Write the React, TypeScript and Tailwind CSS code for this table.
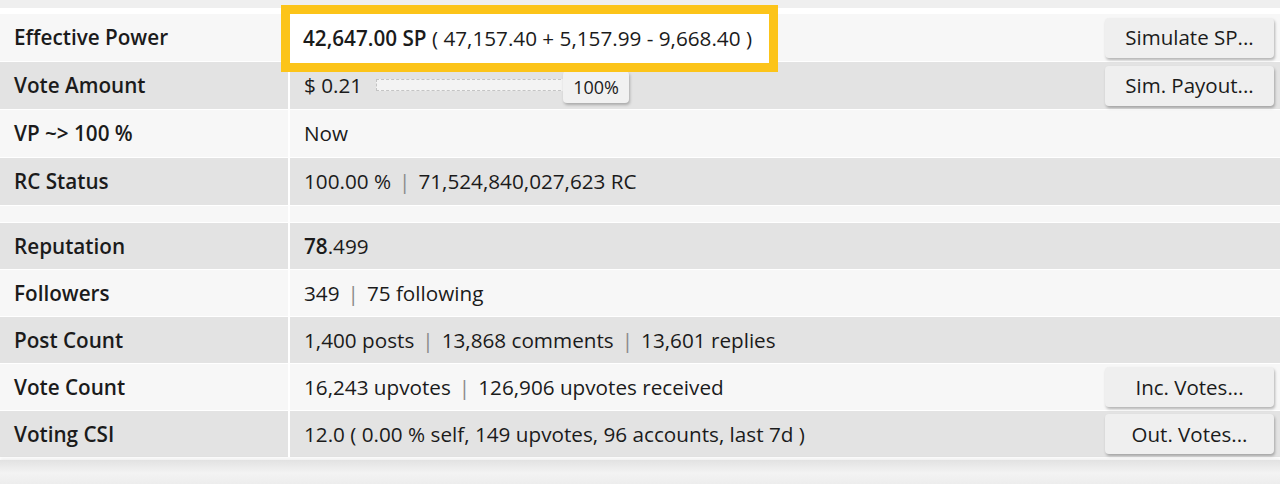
import React from 'react';

type Row = {
  label: string;
  value: React.ReactNode;
  action?: string;
  shade: 'light' | 'dark';
};

const Sep = () => <span className="mx-[8px] text-[#8a8a8a]">|</span>;

function ActionButton({ children }: { children: React.ReactNode }) {
  return (
    <button className="h-[40px] w-[169px] rounded-[4px] bg-[#efefef] text-[20.5px] text-[#1b1b1b] shadow-[1px_2px_3px_rgba(0,0,0,0.28)]">
      {children}
    </button>
  );
}

function TableRow({ row, tall }: { row: Row; tall?: boolean }) {
  const bg = row.shade === 'light' ? 'bg-[#f7f7f7]' : 'bg-[#e3e3e3]';
  return (
    <div className={`flex ${tall ? 'h-[48px]' : 'h-[47px]'} border-b border-white ${bg}`}>
      <div className="flex w-[290px] shrink-0 items-center border-r-2 border-white pl-[14px] font-semibold text-[#1b1b1b]">
        {row.label}
      </div>
      <div className="flex flex-1 items-center justify-between pl-[14px] pr-[6px] text-[#1b1b1b]">
        <div className="flex items-center">{row.value}</div>
        {row.action && <ActionButton>{row.action}</ActionButton>}
      </div>
    </div>
  );
}

const topRows: Row[] = [
  {
    label: 'Effective Power',
    value: (
      <span>
        <span className="font-semibold">42,647.00 SP</span> ( 47,157.40 + 5,157.99 - 9,668.40 )
      </span>
    ),
    action: 'Simulate SP...',
    shade: 'light',
  },
  {
    label: 'Vote Amount',
    value: (
      <div className="flex items-center">
        <span>$ 0.21</span>
        <div className="relative ml-[14px] h-[12px] w-[190px] border border-dashed border-[#c4c4c4] bg-[#f3f3f3]">
          <div className="absolute left-[186px] top-[-9px] flex h-[32px] w-[66px] items-center justify-center rounded-[4px] bg-[#f1f1f1] text-[18px] shadow-[1px_2px_3px_rgba(0,0,0,0.25)]">
            100%
          </div>
        </div>
      </div>
    ),
    action: 'Sim. Payout...',
    shade: 'dark',
  },
  { label: 'VP ~> 100 %', value: 'Now', shade: 'light' },
  {
    label: 'RC Status',
    value: (
      <span>
        100.00 %<Sep />71,524,840,027,623 RC
      </span>
    ),
    shade: 'dark',
  },
];

const bottomRows: Row[] = [
  {
    label: 'Reputation',
    value: (
      <span>
        <span className="font-semibold">78</span>.499
      </span>
    ),
    shade: 'dark',
  },
  {
    label: 'Followers',
    value: (
      <span>
        349<Sep />75 following
      </span>
    ),
    shade: 'light',
  },
  {
    label: 'Post Count',
    value: (
      <span>
        1,400 posts<Sep />13,868 comments<Sep />13,601 replies
      </span>
    ),
    shade: 'dark',
  },
  {
    label: 'Vote Count',
    value: (
      <span>
        16,243 upvotes<Sep />126,906 upvotes received
      </span>
    ),
    action: 'Inc. Votes...',
    shade: 'light',
  },
  {
    label: 'Voting CSI',
    value: '12.0 ( 0.00 % self, 149 upvotes, 96 accounts, last 7d )',
    action: 'Out. Votes...',
    shade: 'dark',
  },
];

export default function App() {
  return (
    <div className="relative h-[484px] w-[1280px] overflow-hidden bg-white font-['Open_Sans',sans-serif] text-[20.7px] leading-none">
      {/* previous panel edge */}
      <div className="h-[8px] bg-[#efefef]" />
      <div className="h-[6px] bg-white" />

      {topRows.map((r) => (
        <TableRow key={r.label} row={r} tall />
      ))}

      {/* spacer row */}
      <div className="flex h-[17px] border-b border-white bg-[#f7f7f7]">
        <div className="w-[290px] border-r-2 border-white" />
      </div>

      {bottomRows.map((r) => (
        <TableRow key={r.label} row={r} />
      ))}

      {/* panel bottom shadow */}
      <div className="mt-[2px] h-[26px] bg-gradient-to-b from-[#e2e2e2] via-[#f3f3f3] to-[#ececec] shadow-[0_-2px_3px_rgba(0,0,0,0.06)]" />

      {/* highlight box */}
      <div className="absolute left-[281px] top-[5px] h-[67px] w-[497px] border-[9px] border-[#fcc419] bg-white">
        <div className="flex h-full items-center pl-[13px] text-[#1b1b1b]">
          <span className="font-semibold">42,647.00 SP</span>
          <span className="whitespace-pre"> ( 47,157.40 + 5,157.99 - 9,668.40 )</span>
        </div>
      </div>
    </div>
  );
}
